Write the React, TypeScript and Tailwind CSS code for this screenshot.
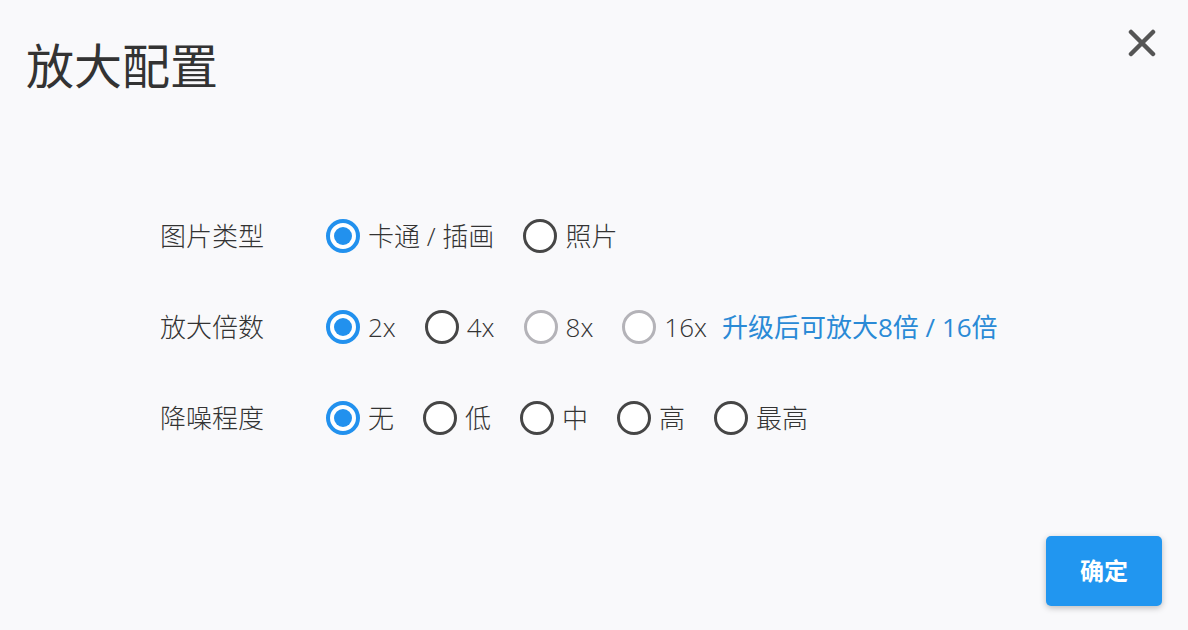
import React from "react";

type Opt = { label: string; state: "on" | "off" | "disabled" };

const rows: { title: string; options: Opt[]; note?: string }[] = [
  {
    title: "图片类型",
    options: [
      { label: "卡通 / 插画", state: "on" },
      { label: "照片", state: "off" },
    ],
  },
  {
    title: "放大倍数",
    options: [
      { label: "2x", state: "on" },
      { label: "4x", state: "off" },
      { label: "8x", state: "disabled" },
      { label: "16x", state: "disabled" },
    ],
    note: "升级后可放大8倍 / 16倍",
  },
  {
    title: "降噪程度",
    options: [
      { label: "无", state: "on" },
      { label: "低", state: "off" },
      { label: "中", state: "off" },
      { label: "高", state: "off" },
      { label: "最高", state: "off" },
    ],
  },
];

const font = "[font-family:'Open_Sans','Noto_Sans_CJK_SC',sans-serif]";

const Radio = ({ state }: { state: Opt["state"] }) => {
  if (state === "on") {
    return (
      <span className="flex w-[34px] h-[34px] shrink-0 items-center justify-center rounded-full border-[4px] border-[#2291ee] bg-white">
        <span className="w-[18px] h-[18px] rounded-full bg-[#2291ee]" />
      </span>
    );
  }
  return (
    <span
      className={
        state === "off"
          ? "w-[34px] h-[34px] shrink-0 rounded-full border-[3px] border-[#464646] bg-white"
          : "w-[34px] h-[34px] shrink-0 rounded-full border-[3px] border-[#b4b3b8] bg-white"
      }
    />
  );
};

export default function App() {
  return (
    <div className={`w-[1188px] h-[630px] bg-[#f9f9fb] flex flex-col ${font}`}>
      <div className="flex items-start justify-between pl-[26px] pr-[32px] pt-[36px]">
        <h1 className="text-[48px] leading-[60px] text-[#333] font-normal tracking-[0]">放大配置</h1>
        <svg width="28" height="28" viewBox="0 0 28 28" className="mt-[-7px]">
          <path d="M3 3 L25 25 M25 3 L3 25" stroke="#555" strokeWidth="4.5" strokeLinecap="round" />
        </svg>
      </div>

      <div className="flex flex-col gap-[57px] pl-[160px] pt-[123px]">
        {rows.map((row) => (
          <div key={row.title} className="flex items-center h-[34px]">
            <span className="w-[166px] text-[26px] font-light text-[#333]">{row.title}</span>
            <div className="flex items-center gap-[29px]">
              {row.options.map((o) => (
                <label key={o.label} className="flex items-center gap-[8px]">
                  <Radio state={o.state} />
                  <span className="text-[26px] font-light text-[#333] whitespace-nowrap">{o.label}</span>
                </label>
              ))}
            </div>
            {row.note && (
              <span className="ml-[15px] text-[26px] text-[#2a8ad6] whitespace-nowrap">{row.note}</span>
            )}
          </div>
        ))}
      </div>

      <div className="flex-1" />
      <div className="flex justify-end pr-[26px] pb-[24px]">
        <button className="w-[116px] h-[70px] rounded-[5px] bg-[#2196f0] text-white text-[24px] font-bold shadow-[0px_2px_6px_#00000040]">
          确定
        </button>
      </div>
    </div>
  );
}
